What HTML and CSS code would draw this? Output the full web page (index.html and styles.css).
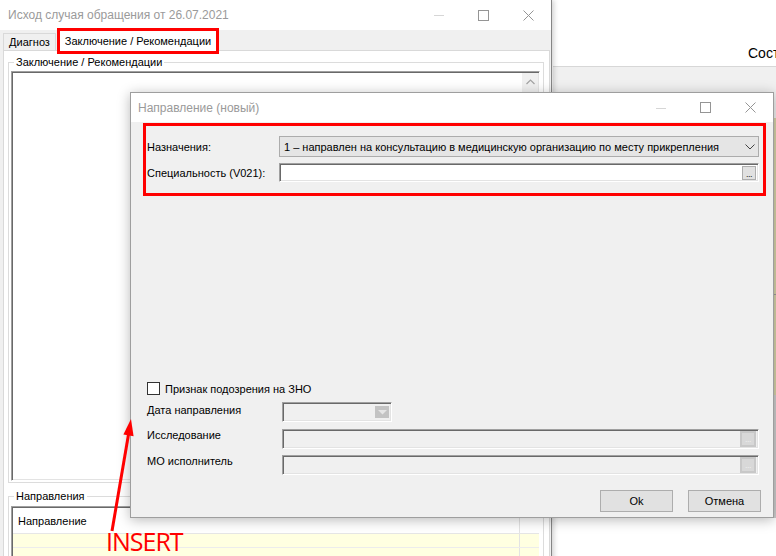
FILE: index.html
```html
<!DOCTYPE html>
<html>
<head>
<meta charset="utf-8">
<link rel="stylesheet" href="styles.css">
</head>
<body>
<div class="desktop">

  <div class="bgwin">
    <div class="bg-head"><span class="sost">Сост</span></div>
    <div class="bg-tool"></div>
    <div class="bg-body">
      <div class="bg-main"></div>
      <div class="bg-side">
        <div class="side-k1"></div>
        <div class="side-k2"></div>
        <div class="side-g"></div>
      </div>
    </div>
  </div>

  <div class="outer">
    <div class="titlebar">
      <span class="title">Исход случая обращения от 26.07.2021</span>
      <div class="caps">
        <span class="cap"><svg width="10" height="10" viewBox="0 0 10 10"><path d="M0 5.5H10" class="g-min"/></svg></span>
        <span class="cap"><svg width="11" height="11" viewBox="0 0 11 11"><rect x="0.5" y="0.5" width="10" height="10" class="g-max"/></svg></span>
        <span class="cap"><svg width="11" height="11" viewBox="0 0 11 11"><path d="M0.5 0.5L10.5 10.5M10.5 0.5L0.5 10.5" class="g-max"/></svg></span>
      </div>
    </div>
    <div class="tabs">
      <span class="tab">Диагноз</span>
      <span class="tab active">Заключение / Рекомендации</span>
    </div>
    <div class="tabpage">
      <fieldset class="group g1">
        <legend>Заключение / Рекомендации</legend>
        <div class="memo">
          <div class="memo-fill"></div>
          <div class="vscroll">
            <span class="sbtn"><svg width="9" height="6" viewBox="0 0 9 6"><path d="M0.5 5L4.5 1L8.5 5" class="g-up"/></svg></span>
          </div>
        </div>
      </fieldset>
      <fieldset class="group g2">
        <legend>Направления</legend>
        <div class="grid">
          <div class="grow head"><span class="cell c1">Направление</span><span class="cell c2"></span></div>
          <div class="grow yrow"><span class="cell c1"></span><span class="cell c2"></span></div>
          <div class="grow yrow"><span class="cell c1"></span><span class="cell c2"></span></div>
        </div>
      </fieldset>
    </div>
  </div>

  <div class="dialog">
    <div class="titlebar dtitle">
      <span class="title">Направление (новый)</span>
      <div class="caps">
        <span class="cap"><svg width="10" height="10" viewBox="0 0 10 10"><path d="M0 5.5H10" class="g-min"/></svg></span>
        <span class="cap"><svg width="11" height="11" viewBox="0 0 11 11"><rect x="0.5" y="0.5" width="10" height="10" class="g-max"/></svg></span>
        <span class="cap"><svg width="11" height="11" viewBox="0 0 11 11"><path d="M0.5 0.5L10.5 10.5M10.5 0.5L0.5 10.5" class="g-max"/></svg></span>
      </div>
    </div>
    <div class="dbody">
      <div class="hl">
        <div class="frow">
          <span class="flabel">Назначения:</span>
          <div class="combo">
            <span class="combo-text">1 – направлен на консультацию в медицинскую организацию по месту прикрепления</span>
            <svg width="10" height="6" viewBox="0 0 10 6"><path d="M0.5 0.5L5 5L9.5 0.5" class="g-chev"/></svg>
          </div>
        </div>
        <div class="frow">
          <span class="flabel">Специальность (V021):</span>
          <div class="edit"><span class="dots">...</span></div>
        </div>
      </div>
      <div class="spacer"></div>
      <div class="chk"><span class="box"></span><span>Признак подозрения на ЗНО</span></div>
      <div class="lrow r-date">
        <span class="llabel">Дата направления</span>
        <div class="edit dis date">
          <span class="ddbtn"><svg width="9" height="6" viewBox="0 0 9 6"><path d="M0 1H9L4.5 5.5Z" class="g-dd"/></svg></span>
        </div>
      </div>
      <div class="lrow r-res">
        <span class="llabel">Исследование</span>
        <div class="edit dis wide"><span class="dots dis-dots">...</span></div>
      </div>
      <div class="lrow r-mo">
        <span class="llabel">МО исполнитель</span>
        <div class="edit dis wide"><span class="dots dis-dots">...</span></div>
      </div>
      <div class="btns">
        <span class="btn">Ok</span>
        <span class="btn">Отмена</span>
      </div>
    </div>
  </div>

  <svg class="annot" width="776" height="556" viewBox="0 0 776 556">
    <path d="M112 531L129.6 428" class="a-line"/>
    <polygon points="131,419 123.4,434.5 133.6,436.2" class="a-head"/>
  </svg>
  <div class="insert">INSERT</div>
</div>
</body>
</html>
```
FILE: styles.css
```css
html, body {
  margin: 0;
  padding: 0;
}
body {
  width: 776px;
  height: 556px;
  overflow: hidden;
  background: #fff;
  font-family: "Liberation Sans", Arial, sans-serif;
  font-size: 11px;
  color: #000;
}
.desktop {
  position: relative;
  width: 776px;
  height: 556px;
  overflow: hidden;
}

/* background window (right) */
.bgwin {
  position: absolute;
  left: 553px;
  top: 0;
  right: 0;
  bottom: 0;
  display: flex;
  flex-direction: column;
  background: #fff;
}
.bg-head {
  height: 67px;
  box-sizing: border-box;
  border-bottom: 1px solid #d7d7d7;
  display: flex;
  align-items: flex-end;
  padding-left: 195px;
  padding-bottom: 5px;
  overflow: hidden;
}
.sost {
  font-size: 14px;
  line-height: 16px;
  white-space: nowrap;
}
.bg-tool {
  height: 51px;
  background: #f0f0f0;
  flex: none;
}
.bg-body {
  flex: 1;
  display: flex;
}
.bg-main {
  flex: 1;
  background: #fff;
}
.bg-side {
  width: 3px;
  display: flex;
  flex-direction: column;
}
.side-k1 {
  height: 176px;
  background: #d6d2a8;
  border-bottom: 1px solid #9c9c9c;
}
.side-k2 {
  height: 100px;
  background: #d6d2a8;
}
.side-g {
  height: 123px;
  background: #cdcdcd;
}

/* outer window */
.outer {
  position: absolute;
  left: 0;
  top: 0;
  width: 552px;
  height: 600px;
  box-sizing: border-box;
  border-right: 1px solid #858585;
  background: #f0f0f0;
  box-shadow: 2px 0 5px rgba(0, 0, 0, 0.18);
  display: flex;
  flex-direction: column;
}
.titlebar {
  height: 30px;
  flex: none;
  background: #fff;
  display: flex;
  align-items: center;
  justify-content: space-between;
}
.title {
  padding-left: 8px;
  font-size: 12px;
  color: #9a9a9a;
  white-space: nowrap;
}
.caps {
  display: flex;
  height: 100%;
}
.cap {
  width: 45px;
  display: flex;
  align-items: center;
  justify-content: center;
}
.g-min {
  stroke: #d6d6d6;
  stroke-width: 1;
  fill: none;
}
.g-max {
  stroke: #959595;
  stroke-width: 1;
  fill: none;
}

.tabs {
  height: 20px;
  flex: none;
  display: flex;
  align-items: flex-end;
  padding-left: 3px;
}
.tab {
  height: 17px;
  box-sizing: border-box;
  width: 53px;
  border: 1px solid #d9d9d9;
  border-bottom: none;
  background: #f0f0f0;
  display: flex;
  align-items: center;
  justify-content: center;
  white-space: nowrap;
}
.tab.active {
  position: relative;
  z-index: 2;
  width: 156px;
  height: 20px;
  margin-left: 4px;
  margin-bottom: -1px;
  background: #fff;
  border-color: #fff;
  outline: 3px solid #f00;
  padding-bottom: 2px;
}
.tabpage {
  flex: 1;
  margin: 0 1px 0 3px;
  border: 1px solid #d9d9d9;
  background: #fff;
  padding: 4px 5px 0 4px;
  display: flex;
  flex-direction: column;
}
.group {
  margin: 0;
  border: 1px solid #dcdcdc;
  padding: 2px 3px 1px 2px;
  min-width: 0;
}
.group legend {
  padding: 0 2px;
  margin-left: 3px;
  line-height: 14px;
  font-size: 11px;
}
.g1 {
  flex: none;
}
.g2 {
  margin-top: 6px;
  padding-top: 3px;
  flex: 1;
}
.memo {
  height: 410px;
  box-sizing: border-box;
  border: 1px solid;
  border-color: #a0a0a0 #fff #fff #a0a0a0;
  box-shadow: inset 1px 1px 0 #696969, inset -1px -1px 0 #e3e3e3;
  background: #fff;
  display: flex;
  padding: 1px;
}
.memo-fill {
  flex: 1;
}
.vscroll {
  width: 16px;
  background: #f0f0f0;
}
.sbtn {
  height: 17px;
  display: flex;
  align-items: center;
  justify-content: center;
}
.g-up {
  stroke: #a3a3a3;
  stroke-width: 1.2;
  fill: none;
}
.grid {
  height: 100px;
  box-sizing: border-box;
  border: 1px solid;
  border-color: #a0a0a0 #fff #fff #a0a0a0;
  box-shadow: inset 1px 1px 0 #696969;
  padding: 1px 0 0 1px;
  background: #fff;
}
.grow {
  display: flex;
}
.grow.head {
  height: 25px;
  border-bottom: 1px solid #e6e6e6;
  align-items: center;
}
.grow.yrow {
  height: 13px;
  background: #ffffe1;
  border-bottom: 1px solid #ececec;
}
.cell.c1 {
  width: 507px;
  padding-left: 5px;
  box-sizing: border-box;
  border-right: 1px solid #e3e3e3;
  align-self: stretch;
  display: flex;
  align-items: center;
}
.cell.c2 {
  flex: 1;
}

/* dialog */
.dialog {
  position: absolute;
  left: 130px;
  top: 92px;
  width: 644px;
  height: 426px;
  box-sizing: border-box;
  border: 1px solid #9e9e9e;
  background: #f0f0f0;
  box-shadow: 0 2px 12px rgba(0, 0, 0, 0.28);
  display: flex;
  flex-direction: column;
}
.dtitle {
  height: 29px;
}
.dtitle .title {
  padding-left: 7px;
}
.dbody {
  flex: 1;
  display: flex;
  flex-direction: column;
  padding-bottom: 5px;
}
.hl {
  margin: 1px 7px 0 12px;
  border: 3px solid #f00;
  padding: 10px 4px 11px 1px;
  display: flex;
  flex-direction: column;
  gap: 6px;
}
.frow {
  display: flex;
  align-items: center;
}
.flabel {
  width: 132px;
  flex: none;
  white-space: nowrap;
}
.combo {
  flex: 1;
  height: 21px;
  box-sizing: border-box;
  border: 1px solid #acacac;
  background: #e5e5e5;
  display: flex;
  align-items: center;
  justify-content: space-between;
  padding: 0 3px 0 4px;
  white-space: nowrap;
  overflow: hidden;
}
.g-chev {
  stroke: #444;
  stroke-width: 1;
  fill: none;
}
.edit {
  flex: 1;
  height: 19px;
  box-sizing: border-box;
  border: 1px solid;
  border-color: #a0a0a0 #fff #fff #a0a0a0;
  box-shadow: inset 1px 1px 0 #696969, inset -1px -1px 0 #e3e3e3;
  background: #fff;
  display: flex;
  align-items: center;
  justify-content: flex-end;
  padding-right: 2px;
}
.dots {
  width: 14px;
  height: 14px;
  box-sizing: border-box;
  border: 1px solid #adadad;
  background: #e1e1e1;
  font-size: 9px;
  line-height: 14px;
  text-align: center;
  color: #222;
  letter-spacing: -0.5px;
}
.spacer {
  flex: 1;
}
.chk {
  height: 15px;
  flex: none;
  display: flex;
  align-items: center;
  padding-left: 16px;
  gap: 5px;
}
.box {
  width: 13px;
  height: 13px;
  box-sizing: border-box;
  border: 1px solid #333;
  background: #fff;
}
.lrow {
  height: 20px;
  flex: none;
  display: flex;
  align-items: flex-start;
  padding-left: 16px;
}
.r-date {
  margin-top: 6px;
}
.r-res {
  margin-top: 7px;
}
.r-mo {
  margin-top: 6px;
}
.llabel {
  width: 135px;
  flex: none;
  white-space: nowrap;
  line-height: 13px;
}
.r-date .llabel {
  padding-top: 2px;
}
.edit.dis {
  height: 20px;
  background: #f0f0f0;
}
.edit.wide {
  flex: none;
  width: 477px;
}
.edit.date {
  flex: none;
  width: 110px;
}
.ddbtn {
  width: 14px;
  height: 12px;
  background: #c3c3c3;
  display: flex;
  align-items: center;
  justify-content: center;
}
.g-dd {
  fill: #e6e6e6;
}
.dis-dots {
  width: 16px;
  height: 16px;
  border: 2px solid #c8c8c8;
  background: #d8d8d8;
  color: #eee;
  line-height: 12px;
}
.btns {
  margin-top: 15px;
  display: flex;
  justify-content: flex-end;
  gap: 15px;
  padding-right: 12px;
}
.btn {
  width: 73px;
  height: 22px;
  box-sizing: border-box;
  border: 1px solid #adadad;
  background: #e1e1e1;
  display: flex;
  align-items: center;
  justify-content: center;
}

/* annotation */
.annot {
  position: absolute;
  left: 0;
  top: 0;
  pointer-events: none;
}
.a-line {
  stroke: #f00;
  stroke-width: 3;
  fill: none;
}
.a-head {
  fill: #f00;
}
.insert {
  position: absolute;
  left: 106px;
  top: 529px;
  font-family: "Open Sans", "Noto Sans", sans-serif;
  font-size: 25px;
  line-height: 24px;
  color: #f00;
  letter-spacing: -1px;
}
```
